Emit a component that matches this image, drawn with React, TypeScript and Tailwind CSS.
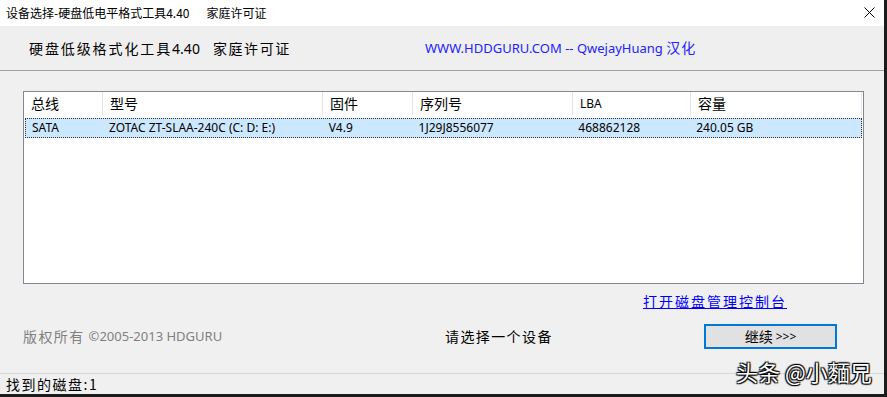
import React from "react";

const CJK = "font-['Noto_Sans_CJK_SC','Noto_Sans',sans-serif]";
const LAT = "font-['Noto_Sans','Noto_Sans_CJK_SC',sans-serif]";

const cols = [
  { w: "w-[79px]", rw: "w-[77px]", h: "总线", v: "SATA", hf: CJK + " text-[14px]" },
  { w: "w-[220px]", rw: "w-[220px]", h: "型号", v: "ZOTAC ZT-SLAA-240C (C: D: E:)", hf: CJK + " text-[14px]" },
  { w: "w-[90px]", rw: "w-[90px]", h: "固件", v: "V4.9", hf: CJK + " text-[14px]" },
  { w: "w-[160px]", rw: "w-[160px]", h: "序列号", v: "1J29J8556077", hf: CJK + " text-[14px]" },
  { w: "w-[118px]", rw: "w-[118px]", h: "LBA", v: "468862128", hf: LAT + " text-[12px]" },
  { w: "w-[171px]", rw: "w-[171px]", h: "容量", v: "240.05 GB", hf: CJK + " text-[14px]" },
];

export default function App() {
  return (
    <div className="w-[887px] h-[397px] bg-[#1c1c1c] overflow-hidden relative">
      <div className="w-[884px] h-[394px] flex flex-col bg-[#f0f0f0]">
        {/* Title bar */}
        <div className={"h-[26px] bg-white flex items-center pl-[6px] pr-[9px] text-[12px] text-black " + CJK}>
          <span>设备选择-硬盘低电平格式工具4.40</span>
          <span className="ml-[17px]">家庭许可证</span>
          <svg width="11" height="11" viewBox="0 0 11 11" className="ml-auto -mt-[1px]">
            <path d="M0.5 0.5 L10.5 10.5 M10.5 0.5 L0.5 10.5" stroke="#000" strokeWidth="1" />
          </svg>
        </div>
        {/* Header */}
        <div className="h-[45px] bg-[#efefef] flex items-center border-b border-[#a0a0a0]">
          <div className={"ml-[29px] w-[396px] text-[14px] text-black flex items-baseline " + CJK}>
            <span className="tracking-[1.9px]">硬盘低级格式化工具</span>
            <span className={LAT}>4.40</span>
            <span className="ml-[13px] tracking-[1.6px]">家庭许可证</span>
          </div>
          <div className={"text-[13px] text-[#2222ff] " + LAT}>
            WWW.HDDGURU.COM -- QwejayHuang <span className={"text-[14px] tracking-[1px] " + CJK}>汉化</span>
          </div>
        </div>
        {/* List */}
        <div className="mt-5 ml-[23px] w-[841px] h-[193px] border border-[#828790] bg-white">
          <div className="flex h-[23px] items-center">
            {cols.map((c) => (
              <div key={c.h} className={"h-full flex items-center pl-[7px] border-r border-[#e5e5e5] " + c.w + " " + c.hf}>
                {c.h}
              </div>
            ))}
          </div>
          <div className={"mt-[3px] mx-px h-5 bg-[#cce8ff] border border-dotted border-[#333] flex items-center text-[12px] text-black " + LAT}>
            {cols.map((c) => (
              <div key={c.h} className={"pl-1.5 whitespace-nowrap " + c.rw}>
                {c.v}
              </div>
            ))}
          </div>
        </div>
        {/* Link */}
        <div className="h-[34px] flex items-center justify-end pr-[97px]">
          <span className={"text-[14px] text-[#0000ff] underline tracking-[2px] " + CJK}>打开磁盘管理控制台</span>
        </div>
        {/* Bottom row */}
        <div className="h-[37px] flex items-center">
          <div className={"ml-[23px] w-[422px] text-[#808080] flex items-center " + CJK}>
            <span className="text-[14px] tracking-[1.4px]">版权所有</span>
            <span className={"ml-1 text-[13px] " + LAT}>©2005-2013 HDGURU</span>
          </div>
          <div className={"text-[14px] text-black tracking-[1.4px] " + CJK}>请选择一个设备</div>
          <div className={"ml-auto mr-[47px] w-[133px] h-[25px] border-2 border-[#0078d7] bg-[#e1e1e1] flex items-center justify-center text-[14px] text-black " + CJK}>
            继续 <span className={"ml-[3px] text-[12px] " + LAT}>&gt;&gt;&gt;</span>
          </div>
        </div>
        {/* spacer */}
        <div className="flex-1 border-b border-[#d7d7d7]" />
        {/* Status bar */}
        <div className={"h-5 flex items-center pl-1.5 text-[14px] text-black " + CJK}>
          <span className="tracking-[1.5px]">找到的磁盘:1</span>
        </div>
      </div>
      {/* Watermark overlay */}
      <div
        className={"absolute left-[736px] top-[360px] text-[22px] leading-none text-white whitespace-nowrap [text-shadow:1px_1px_1px_#000,-1px_-1px_1px_#000,1px_-1px_1px_#000,-1px_1px_1px_#000] " + CJK}
      >
        头条 @小麵兄
      </div>
    </div>
  );
}
